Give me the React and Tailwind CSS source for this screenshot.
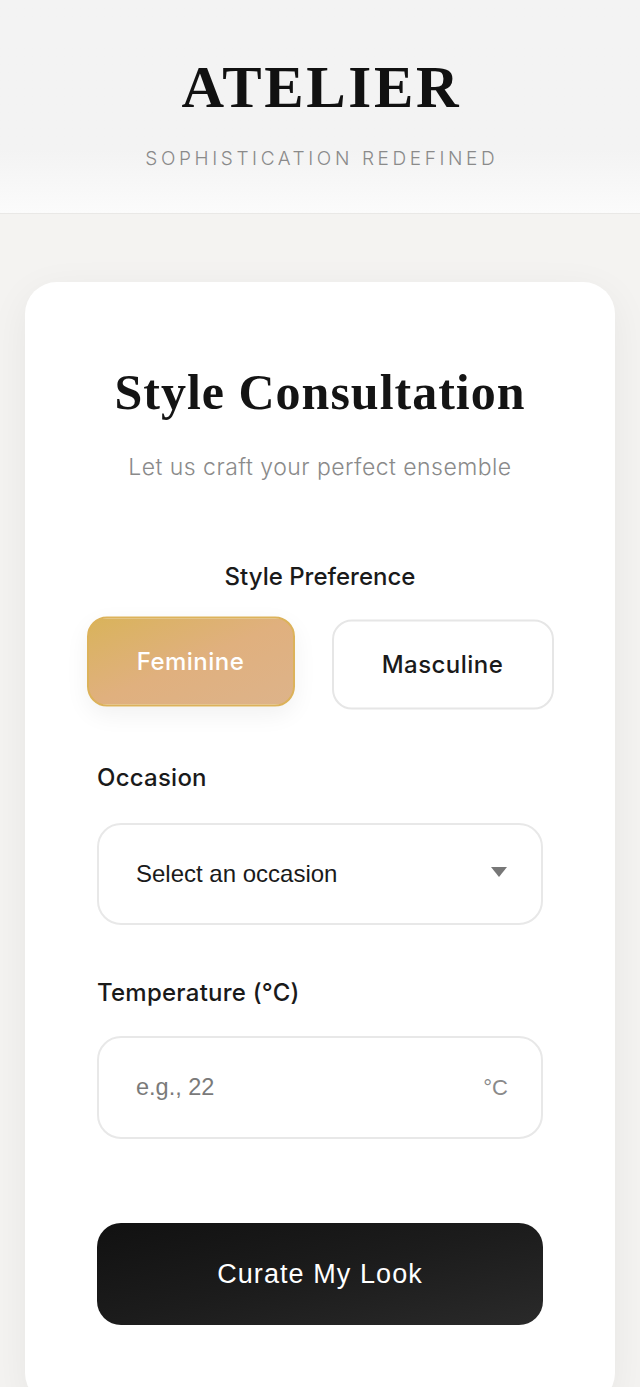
import { useState } from 'react'

const serif = { fontFamily: '"Liberation Serif", "DejaVu Serif", serif' }
const inter = { fontFamily: 'Inter, "Noto Sans", sans-serif' }
const arial = { fontFamily: '"Liberation Sans", Arial, sans-serif' }

export default function App() {
  const [pref, setPref] = useState('feminine')

  return (
    <div className="min-h-screen bg-[#f4f3f1]" style={inter}>
      {/* Header */}
      <header className="h-[214px] bg-gradient-to-b from-[#f3f3f3] from-70% to-[#fbfbfb] border-b border-[#e9e8e6] flex flex-col items-center">
        <h1
          className="mt-[54px] text-[59px] leading-[66px] font-bold tracking-[0.045em] pl-[0.045em] text-[#111]"
          style={serif}
        >
          ATELIER
        </h1>
        <p className="mt-[27px] text-[19px] leading-[24px] font-light tracking-[0.19em] pl-[0.19em] text-[#8a8a8a]">
          SOPHISTICATION REDEFINED
        </p>
      </header>

      {/* Card */}
      <main className="px-[25px] pt-[68px]">
        <div className="bg-white rounded-[32px] shadow-[0_10px_40px_rgba(0,0,0,0.06)] px-[72px] pt-[82px] pb-[80px]">
          <h2 className="text-center text-[50px] leading-[56px] font-bold tracking-[0.02em] text-[#141414]" style={serif}>
            Style Consultation
          </h2>
          <p className="mt-[32px] text-center text-[23px] leading-[30px] font-light text-[#8a8a8a] tracking-[0.02em]">
            Let us craft your perfect ensemble
          </p>

          <p className="mt-[80px] text-center text-[24px] leading-[30px] font-medium text-[#1a1a1a]">
            Style Preference
          </p>
          <div className="-mx-4 mt-[26px] flex justify-center items-center gap-[37px]">
            <button
              onClick={() => setPref('feminine')}
              className={
                pref === 'feminine'
                  ? 'w-[208px] h-[90px] -translate-y-[1.5px] rounded-[20px] border-2 border-[#dcb25a] bg-gradient-to-br from-[#d9b35a] via-[#e0b07e] to-[#ddb38a] text-white text-[24px] font-medium tracking-[0.02em] shadow-[0_8px_24px_rgba(0,0,0,0.06)]'
                  : 'w-[208px] h-[90px] rounded-[20px] border-2 border-[#e8e8e8] bg-white text-[#1a1a1a] text-[24px] font-medium tracking-[0.02em]'
              }
            >
              Feminine
            </button>
            <button
              onClick={() => setPref('masculine')}
              className={
                pref === 'masculine'
                  ? 'w-[222px] h-[90px] translate-y-[1.5px] rounded-[20px] border-2 border-[#dcb25a] bg-gradient-to-br from-[#d9b35a] via-[#e0b07e] to-[#ddb38a] text-white text-[24px] font-medium tracking-[0.02em]'
                  : 'w-[222px] h-[90px] translate-y-[1.5px] rounded-[20px] border-2 border-[#e6e6e6] bg-white text-[#1a1a1a] text-[24px] font-medium tracking-[0.02em]'
              }
            >
              Masculine
            </button>
          </div>

          <label className="block mt-[55px] text-[24px] leading-[30px] font-medium tracking-[0.01em] text-[#1a1a1a]">
            Occasion
          </label>
          <div className="mt-[30px] h-[102px] rounded-[24px] border-2 border-[#e8e8e8] flex items-center justify-between pl-[37px] pr-[33px]">
            <span className="text-[24px] text-[#1a1a1a]" style={arial}>Select an occasion</span>
            <svg width="18" height="12" viewBox="0 0 18 12" className="mt-[-4px]">
              <path d="M1 1 H17 L9 11 Z" fill="#777" />
            </svg>
          </div>

          <label className="block mt-[53px] text-[24px] leading-[30px] font-medium tracking-[0.01em] text-[#1a1a1a]">
            Temperature (°C)
          </label>
          <div className="mt-[28px] h-[103px] rounded-[24px] border-2 border-[#e8e8e8] flex items-center justify-between pl-[37px] pr-[33px]">
            <span className="text-[23.5px] text-[#7a7a7a]" style={arial}>e.g., 22</span>
            <span className="text-[22px] text-[#8a8a8a]" style={arial}>°C</span>
          </div>

          <button
            className="mt-[84px] w-full h-[102px] rounded-[24px] bg-gradient-to-br from-[#111111] via-[#1c1c1c] to-[#2a2a2a] text-white text-[27px] tracking-[0.04em]"
            style={arial}
          >
            Curate My Look
          </button>
        </div>
      </main>
    </div>
  )
}
